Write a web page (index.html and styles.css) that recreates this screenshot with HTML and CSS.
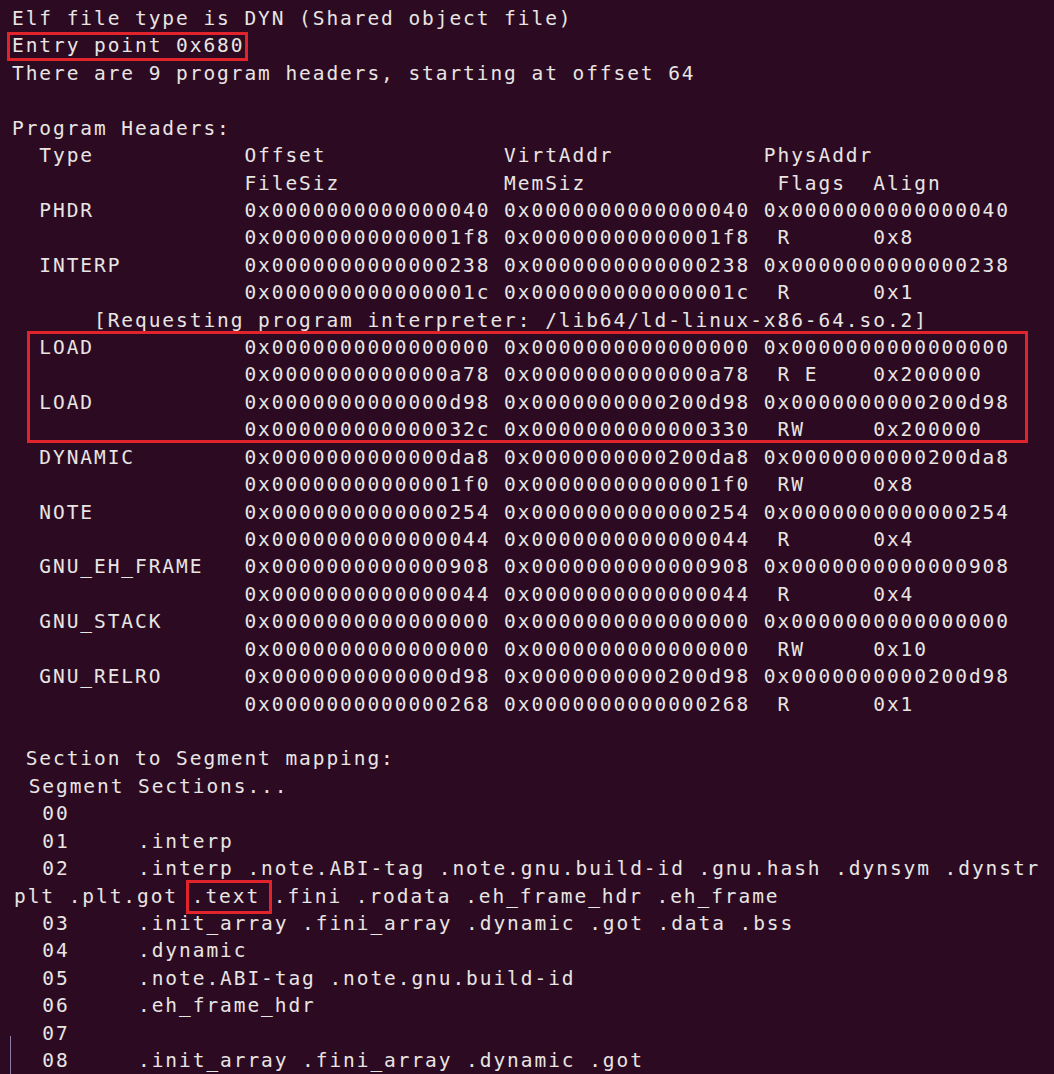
FILE: index.html
```html
<!DOCTYPE html>
<html>
<head>
<meta charset="utf-8">
<link rel="stylesheet" href="styles.css">
</head>
<body>
<div class="term">
<div class="ln">Elf file type is DYN (Shared object file)</div>
<div class="ln"><span class="mark mark-entry">Entry point 0x680</span></div>
<div class="ln">There are 9 program headers, starting at offset 64</div>
<div class="ln"> </div>
<div class="ln">Program Headers:</div>
<div class="ln">  Type           Offset             VirtAddr           PhysAddr</div>
<div class="ln">                 FileSiz            MemSiz              Flags  Align</div>
<div class="ln">  PHDR           0x0000000000000040 0x0000000000000040 0x0000000000000040</div>
<div class="ln">                 0x00000000000001f8 0x00000000000001f8  R      0x8</div>
<div class="ln">  INTERP         0x0000000000000238 0x0000000000000238 0x0000000000000238</div>
<div class="ln">                 0x000000000000001c 0x000000000000001c  R      0x1</div>
<div class="ln">      [Requesting program interpreter: /lib64/ld-linux-x86-64.so.2]</div>
<div class="grp">
<div class="ln">  LOAD           0x0000000000000000 0x0000000000000000 0x0000000000000000</div>
<div class="ln">                 0x0000000000000a78 0x0000000000000a78  R E    0x200000</div>
<div class="ln">  LOAD           0x0000000000000d98 0x0000000000200d98 0x0000000000200d98</div>
<div class="ln">                 0x000000000000032c 0x0000000000000330  RW     0x200000</div>
</div>
<div class="ln">  DYNAMIC        0x0000000000000da8 0x0000000000200da8 0x0000000000200da8</div>
<div class="ln">                 0x00000000000001f0 0x00000000000001f0  RW     0x8</div>
<div class="ln">  NOTE           0x0000000000000254 0x0000000000000254 0x0000000000000254</div>
<div class="ln">                 0x0000000000000044 0x0000000000000044  R      0x4</div>
<div class="ln">  GNU_EH_FRAME   0x0000000000000908 0x0000000000000908 0x0000000000000908</div>
<div class="ln">                 0x0000000000000044 0x0000000000000044  R      0x4</div>
<div class="ln">  GNU_STACK      0x0000000000000000 0x0000000000000000 0x0000000000000000</div>
<div class="ln">                 0x0000000000000000 0x0000000000000000  RW     0x10</div>
<div class="ln">  GNU_RELRO      0x0000000000000d98 0x0000000000200d98 0x0000000000200d98</div>
<div class="ln">                 0x0000000000000268 0x0000000000000268  R      0x1</div>
<div class="ln"> </div>
<div class="ln"> Section to Segment mapping:</div>
<div class="ln shift"> Segment Sections...</div>
<div class="ln shift">  00     </div>
<div class="ln shift">  01     .interp</div>
<div class="ln shift">  02     .interp .note.ABI-tag .note.gnu.build-id .gnu.hash .dynsym .dynstr</div>
<div class="ln shift-s">plt .plt.got <span class="mark mark-text">.text</span> .fini .rodata .eh_frame_hdr .eh_frame</div>
<div class="ln shift">  03     .init_array .fini_array .dynamic .got .data .bss</div>
<div class="ln shift">  04     .dynamic</div>
<div class="ln shift">  05     .note.ABI-tag .note.gnu.build-id</div>
<div class="ln shift">  06     .eh_frame_hdr</div>
<div class="ln shift">  07     </div>
<div class="ln shift">  08     .init_array .fini_array .dynamic .got</div>
</div>
<div class="cursor-line"></div>
</body>
</html>
```
FILE: styles.css
```css
html, body {
  margin: 0;
  padding: 0;
  background: #2c0a22;
  overflow: hidden;
}

body {
  width: 1054px;
  height: 1074px;
  position: relative;
}

.term {
  padding: 5px 0 0 12px;
  font-family: "DejaVu Sans Mono", "Liberation Mono", monospace;
  font-size: 19.5px;
  letter-spacing: 1.93px;
  line-height: 27.43px;
  color: #e8e5e3;
}

.ln {
  height: 27.43px;
  white-space: pre;
}

.shift {
  padding-left: 3px;
}

.shift-s {
  padding-left: 2px;
}

.mark {
  position: relative;
  display: inline-block;
}

.mark::after {
  content: "";
  position: absolute;
  border: 3px solid #e1232b;
  pointer-events: none;
}

.mark-entry::after {
  left: -5px;
  right: -4px;
  top: 0;
  bottom: -1px;
}

.mark-text::after {
  left: -6px;
  right: -12px;
  top: -3px;
  bottom: -4px;
}

.grp {
  position: relative;
}

.grp::before {
  content: "";
  position: absolute;
  left: 15px;
  width: 1001px;
  top: -3px;
  bottom: 1px;
  border: 3px solid #e1232b;
  box-sizing: border-box;
}

.cursor-line {
  position: absolute;
  left: 10px;
  top: 1036px;
  width: 1px;
  height: 38px;
  background: #8c7ca6;
}
```
